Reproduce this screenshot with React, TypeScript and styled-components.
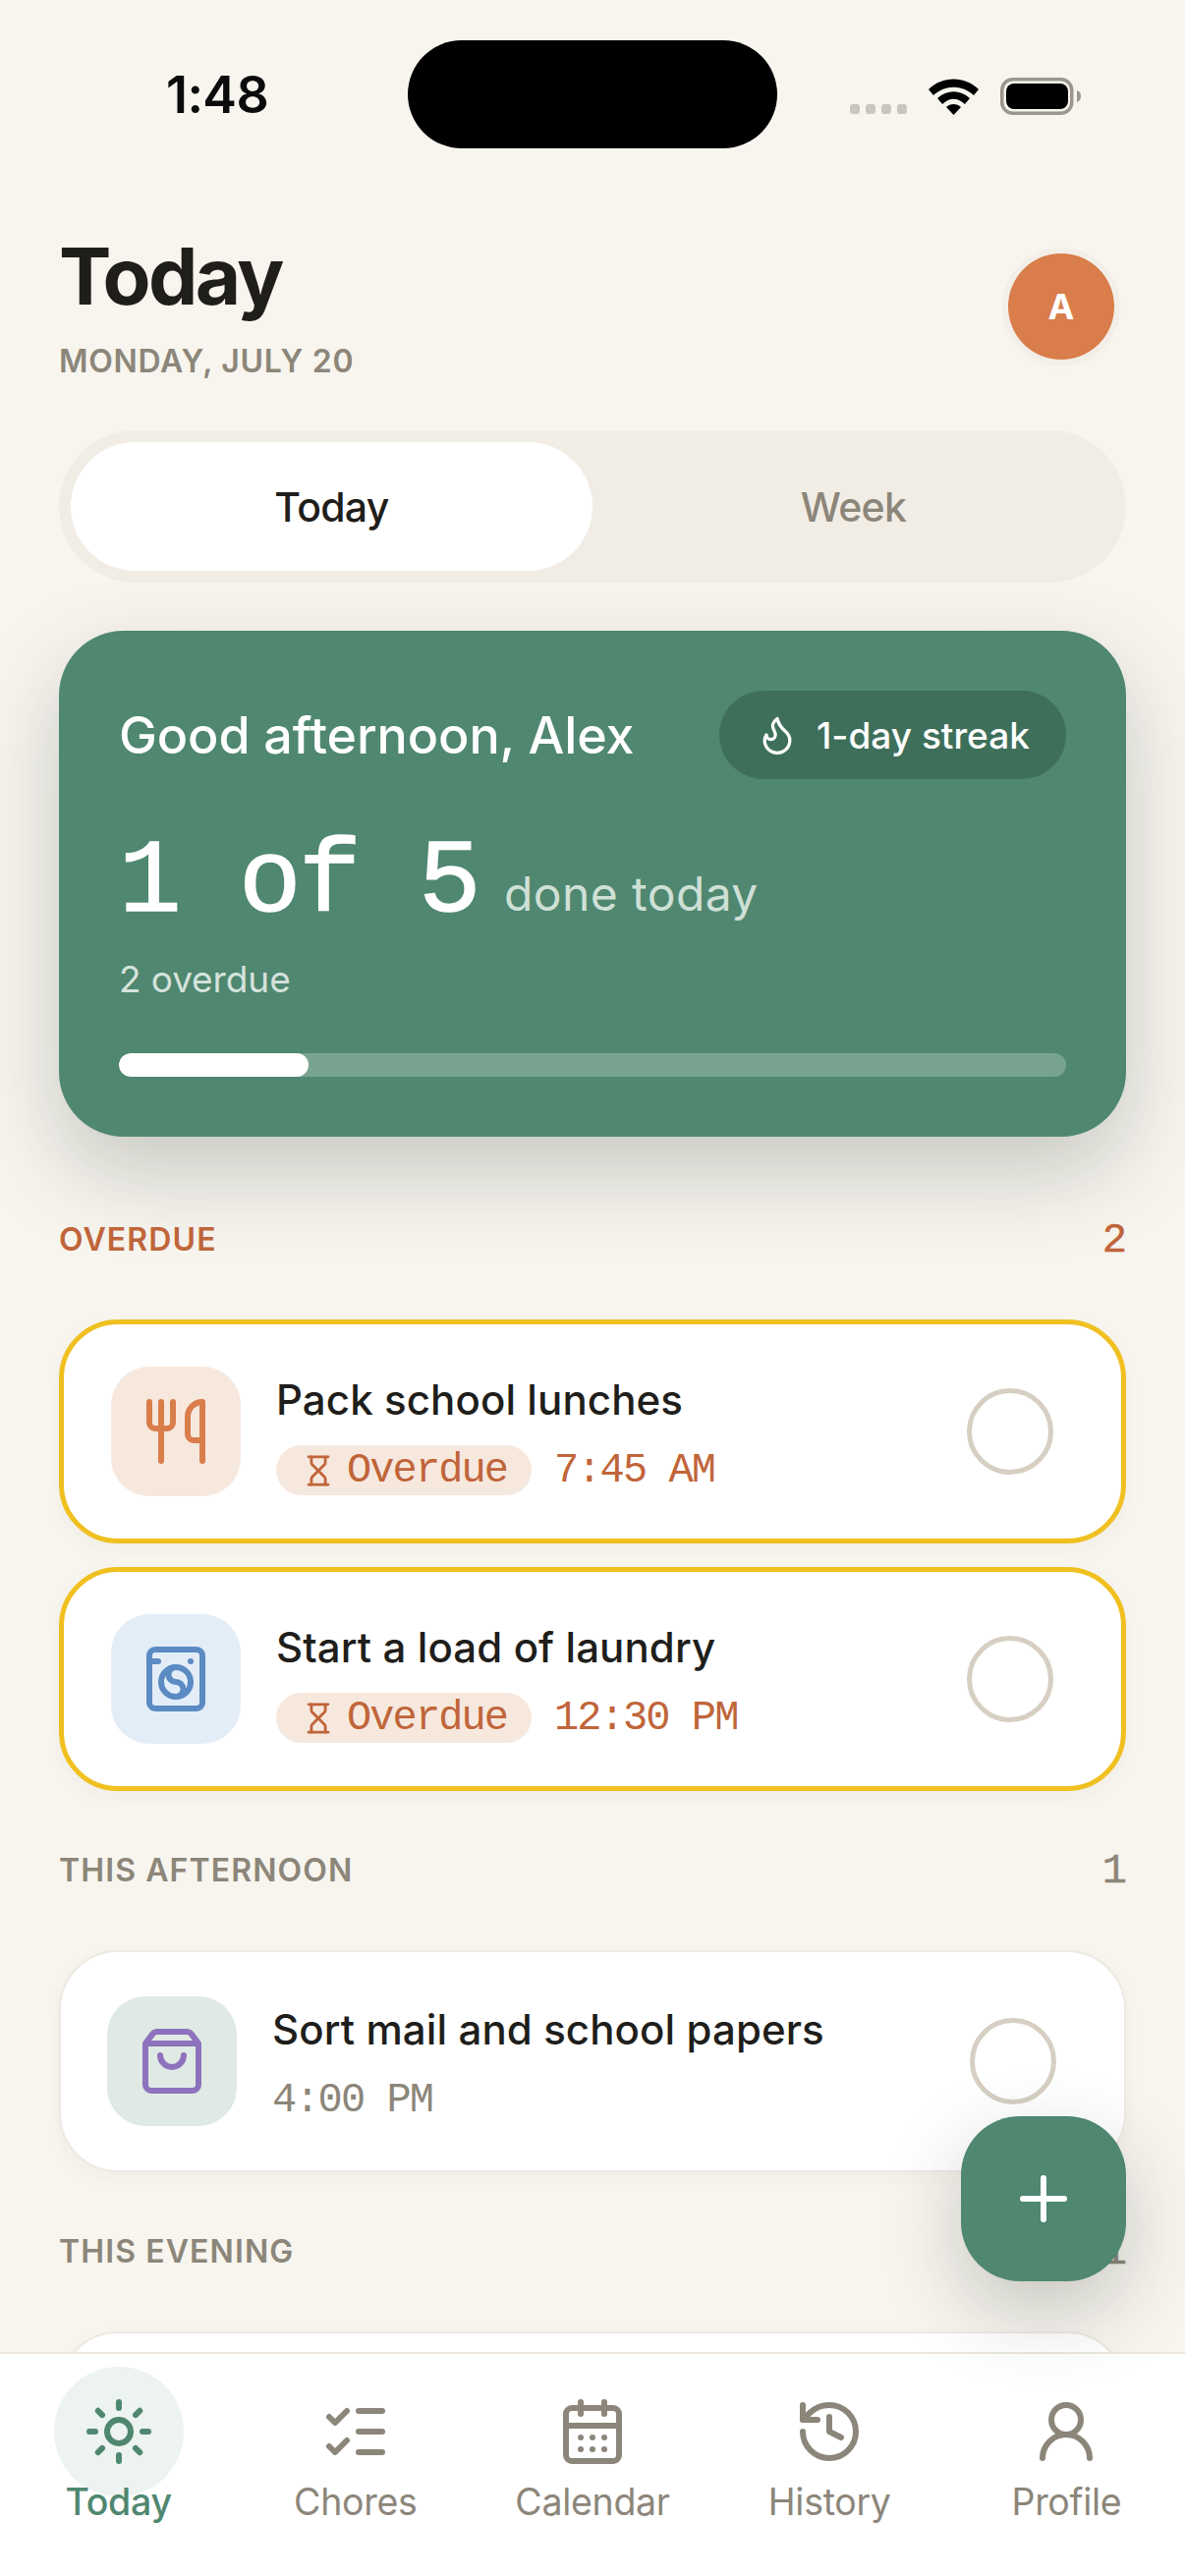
import React from "react";
import styled, { createGlobalStyle } from "styled-components";
import { CalendarDays, Flame, History, Hourglass, ListChecks, Plus, ShoppingBag, Sun, UserRound, Utensils, WashingMachine } from "lucide-react";

const GREEN = "#4f8770";
const RUST = "#c0653a";
const MUTED = "#8c867a";
const INK = "#1f1e1b";
const SANS = `"Inter", "Liberation Sans", sans-serif`;
const MONO = `"Liberation Mono", monospace`;

const Global = createGlobalStyle`
  html, body { margin: 0; padding: 0; background: #f8f5ef; }
  * { box-sizing: border-box; }
`;

const Page = styled.div`
  position: relative; width: 1206px; height: 2622px; overflow: hidden;
  display: flex; flex-direction: column; background: #f8f5ef; font-family: ${SANS}; color: ${INK};
`;
const Status = styled.div`
  flex: none; height: 152px; padding-top: 41px;
  display: grid; grid-template-columns: 415px 376px 415px;
`;
const Time = styled.div`
  padding-left: 169px; font-size: 52px; line-height: 112px; font-weight: 600; letter-spacing: -.6px; color: #0b0b0b;
`;
const Island = styled.div`height: 110px; border-radius: 55px; background: #000;`;
const StatusIcons = styled.div`
  display: flex; align-items: flex-end; gap: 22px; height: 75px; padding-left: 74px;
`;
const Scroll = styled.div`flex: 1; min-height: 0; overflow: hidden; padding: 0 60px;`;
const Header = styled.header`
  display: flex; justify-content: space-between; align-items: flex-start; padding-top: 87px;
`;
const Title = styled.h1`
  margin: 0; font-size: 80px; line-height: 84px; font-weight: 700; letter-spacing: -2.6px; color: ${INK};
`;
const DateLine = styled.div`
  margin-top: 25px; font-size: 32px; line-height: 40px; font-weight: 600; letter-spacing: .7px; color: ${MUTED};
`;
const Avatar = styled.div`
  margin: 19px 12px 0 0; width: 108px; height: 108px; border-radius: 50%; background: #d97d4a; color: #fff;
  display: flex; align-items: center; justify-content: center; font-size: 36px; font-weight: 700;
  box-shadow: 0 0 0 6px #f3efe8, 0 3px 12px rgba(0,0,0,.04);
`;
const Segment = styled.div`
  margin-top: 50px; height: 155px; padding: 12px; border-radius: 78px; background: #f1ede5;
  display: grid; grid-template-columns: 1fr 1fr;
`;
const SegTab = styled.div<{ $on?: boolean }>`
  display: flex; align-items: center; justify-content: center; border-radius: 66px;
  font-size: 41px; letter-spacing: -.7px; font-weight: 500;
  color: ${p => (p.$on ? INK : MUTED)}; background: ${p => (p.$on ? "#fff" : "transparent")};
`;
const Hero = styled.section`
  margin-top: 49px; height: 515px; padding: 61px 61px 0; border-radius: 66px; background: ${GREEN}; color: #fff;
  box-shadow: 0 36px 90px rgba(40,55,45,.24);
`;
const HeroTop = styled.div`display: flex; align-items: center; justify-content: space-between;`;
const Greeting = styled.div`font-size: 52px; font-weight: 500; letter-spacing: -.1px;`;
const Streak = styled.div`
  height: 90px; width: 353px; padding-left: 37px; border-radius: 45px; background: #3e6f5b;
  display: flex; align-items: center; gap: 18px; font-size: 37px; font-weight: 500; letter-spacing: 0;
`;
const Count = styled.div`
  margin-top: 50px; display: flex; align-items: baseline; gap: 26px; height: 112px;
`;
const CountNum = styled.span`
  font-family: ${MONO}; font-size: 106px; line-height: 112px; letter-spacing: -2.6px; color: #fff;
  -webkit-text-stroke: 1.5px #fff;
`;
const CountLabel = styled.span`font-size: 48px; color: #cfe0d6; letter-spacing: .4px;`;
const OverdueNote = styled.div`margin-top: 18px; font-size: 37px; line-height: 48px; color: #d5e3db; letter-spacing: -.1px;`;
const Track = styled.div`margin-top: 51px; height: 24px; border-radius: 12px; background: #78a390; overflow: hidden;`;
const Fill = styled.div`height: 100%; border-radius: 12px; background: #fff;`;
const SectionHead = styled.div<{ $first?: boolean; $tone?: string }>`
  display: flex; justify-content: space-between; align-items: center; height: 40px;
  margin: ${p => (p.$first ? "84px" : "60px")} 0 62px; color: ${p => p.$tone || MUTED};
`;
const SectionName = styled.span`font-size: 32px; font-weight: 600; letter-spacing: 1.1px;`;
const SectionCount = styled.span`font-family: ${MONO}; font-size: 42px; padding-top: 4px; letter-spacing: -1px; -webkit-text-stroke: .5px currentColor;`;
const List = styled.div`display: flex; flex-direction: column; gap: 24px;`;
const Card = styled.article<{ $overdue?: boolean }>`
  display: flex; align-items: center; background: #fff; flex: none;
  height: ${p => (p.$overdue ? "228px" : "226px")}; border-radius: 60px;
  border: ${p => (p.$overdue ? "5px solid #f0c020" : "2px solid #eee9e1")};
  padding: 0 69px 0 ${p => (p.$overdue ? "48px" : "47px")};
  box-shadow: 0 6px 18px rgba(60,50,30,.04);
`;
const Tile = styled.div<{ $bg: string; $fg: string }>`
  flex: none; width: 132px; height: 132px; border-radius: 39px; background: ${p => p.$bg}; color: ${p => p.$fg};
  display: flex; align-items: center; justify-content: center;
`;
const Body = styled.div`flex: 1; min-width: 0; margin-left: 36px; padding-top: 4px; display: flex; flex-direction: column; gap: 17px;`;
const TaskName = styled.div`font-size: 42px; line-height: 58px; font-weight: 500; letter-spacing: .1px; color: ${INK};`;
const Meta = styled.div`display: flex; align-items: center; gap: 23px; height: 51px; font-family: ${MONO}; font-size: 42px; letter-spacing: -1.9px;`;
const Badge = styled.span`
  height: 51px; width: 260px; padding-left: 26px; border-radius: 26px; background: #f7e8de; color: ${RUST};
  display: flex; align-items: center; gap: 12px;
`;
const TimeText = styled.span<{ $late?: boolean }>`color: ${p => (p.$late ? RUST : MUTED)};`;
const Check = styled.div`flex: none; width: 88px; height: 88px; border-radius: 50%; border: 5px solid #d6cfc2; background: #fff;`;
const Fab = styled.button`
  position: absolute; right: 60px; bottom: 300px; width: 168px; height: 168px; border: 0; border-radius: 60px;
  background: ${GREEN}; color: #fff; display: flex; align-items: center; justify-content: center; padding: 0;
  box-shadow: 0 30px 80px rgba(40,50,40,.24);
`;
const TabBar = styled.nav`
  flex: none; height: 228px; background: #fff; border-top: 2px solid #ece6dc;
  display: grid; grid-template-columns: repeat(5, 1fr); padding-top: 13px;
`;
const TabItem = styled.div<{ $on?: boolean }>`
  position: relative; display: flex; flex-direction: column; align-items: center; height: 150px;
  color: ${p => (p.$on ? GREEN : MUTED)}; font-size: 37.5px; font-weight: ${p => (p.$on ? 500 : 400)};
`;
const TabIcon = styled.div<{ $on?: boolean }>`
  width: 132px; height: 132px; border-radius: 50%; background: ${p => (p.$on ? "#edf3f0" : "transparent")};
  display: flex; align-items: center; justify-content: center; flex: none;
`;
const TabLabel = styled.span`position: relative; margin-top: -18px; line-height: 48px; letter-spacing: -.3px;`;

const tabs = [
  { label: "Today", Icon: Sun, on: true },
  { label: "Chores", Icon: ListChecks },
  { label: "Calendar", Icon: CalendarDays },
  { label: "History", Icon: History },
  { label: "Profile", Icon: UserRound },
];

function TaskRow({ name, time, late, bg, fg, Icon }: { name: string; time: string; late?: boolean; bg: string; fg: string; Icon: typeof Sun }) {
  return (
    <Card $overdue={late}>
      <Tile $bg={bg} $fg={fg}><Icon size={72} strokeWidth={2} /></Tile>
      <Body>
        <TaskName>{name}</TaskName>
        <Meta>
          {late && <Badge><Hourglass size={34} strokeWidth={2} />Overdue</Badge>}
          <TimeText $late={late}>{time}</TimeText>
        </Meta>
      </Body>
      <Check />
    </Card>
  );
}

export default function App() {
  return (
    <Page>
      <Global />
      <Status>
        <Time>1:48</Time>
        <Island />
        <StatusIcons>
          <svg width="58" height="10" viewBox="0 0 58 10" fill="#c9c6bf">
            <rect x="0" width="10" height="10" rx="3" /><rect x="16" width="10" height="10" rx="3" />
            <rect x="32" width="10" height="10" rx="3" /><rect x="48" width="10" height="10" rx="3" />
          </svg>
          <svg width="51" height="37" viewBox="0 0 51 37" style={{ marginBottom: -1 }}>
            <path d="M0 11 C14 -3 37 -3 51 11 L46 17 C34 6 17 6 5 17Z" />
            <path d="M9 20 C19 11 32 11 42 20 L37 26 C29 19 22 19 14 26Z" />
            <path d="M18 29 C22 25 29 25 33 29 L25.5 37Z" />
          </svg>
          <svg width="82" height="38" viewBox="0 0 82 38" style={{ marginBottom: -1 }}>
            <rect x="1.75" y="1.75" width="71" height="34.5" rx="11" fill="none" stroke="#9b978f" strokeWidth="3.5" />
            <rect x="6" y="6" width="63" height="26" rx="8" fill="#000" />
            <path d="M78 13 C81 14 82 16 82 19 C82 22 81 24 78 25Z" fill="#9b978f" />
          </svg>
        </StatusIcons>
      </Status>
      <Scroll>
        <Header>
          <div>
            <Title>Today</Title>
            <DateLine>MONDAY, JULY 20</DateLine>
          </div>
          <Avatar>A</Avatar>
        </Header>
        <Segment>
          <SegTab $on>Today</SegTab>
          <SegTab>Week</SegTab>
        </Segment>
        <Hero>
          <HeroTop>
            <Greeting>Good afternoon, Alex</Greeting>
            <Streak><Flame size={44} strokeWidth={1.8} />1-day streak</Streak>
          </HeroTop>
          <Count>
            <CountNum>1 of 5</CountNum>
            <CountLabel>done today</CountLabel>
          </Count>
          <OverdueNote>2 overdue</OverdueNote>
          <Track><Fill style={{ width: `${(1 / 5) * 100}%` }} /></Track>
        </Hero>
        <SectionHead $first $tone={RUST}>
          <SectionName>OVERDUE</SectionName><SectionCount>2</SectionCount>
        </SectionHead>
        <List>
          <TaskRow late name="Pack school lunches" time="7:45 AM" bg="#f7e8de" fg="#d97d4a" Icon={Utensils} />
          <TaskRow late name="Start a load of laundry" time="12:30 PM" bg="#e3edf8" fg="#5b8bc2" Icon={WashingMachine} />
        </List>
        <SectionHead>
          <SectionName>THIS AFTERNOON</SectionName><SectionCount>1</SectionCount>
        </SectionHead>
        <List>
          <TaskRow name="Sort mail and school papers" time="4:00 PM" bg="#dfeae4" fg="#8e72bd" Icon={ShoppingBag} />
        </List>
        <SectionHead>
          <SectionName>THIS EVENING</SectionName><SectionCount>1</SectionCount>
        </SectionHead>
        <List>
          <Card />
        </List>
      </Scroll>
      <Fab aria-label="Add"><Plus size={72} strokeWidth={2} /></Fab>
      <TabBar>
        {tabs.map(({ label, Icon, on }) => (
          <TabItem key={label} $on={on}>
            <TabIcon $on={on}><Icon size={72} strokeWidth={2} /></TabIcon>
            <TabLabel>{label}</TabLabel>
          </TabItem>
        ))}
      </TabBar>
    </Page>
  );
}
